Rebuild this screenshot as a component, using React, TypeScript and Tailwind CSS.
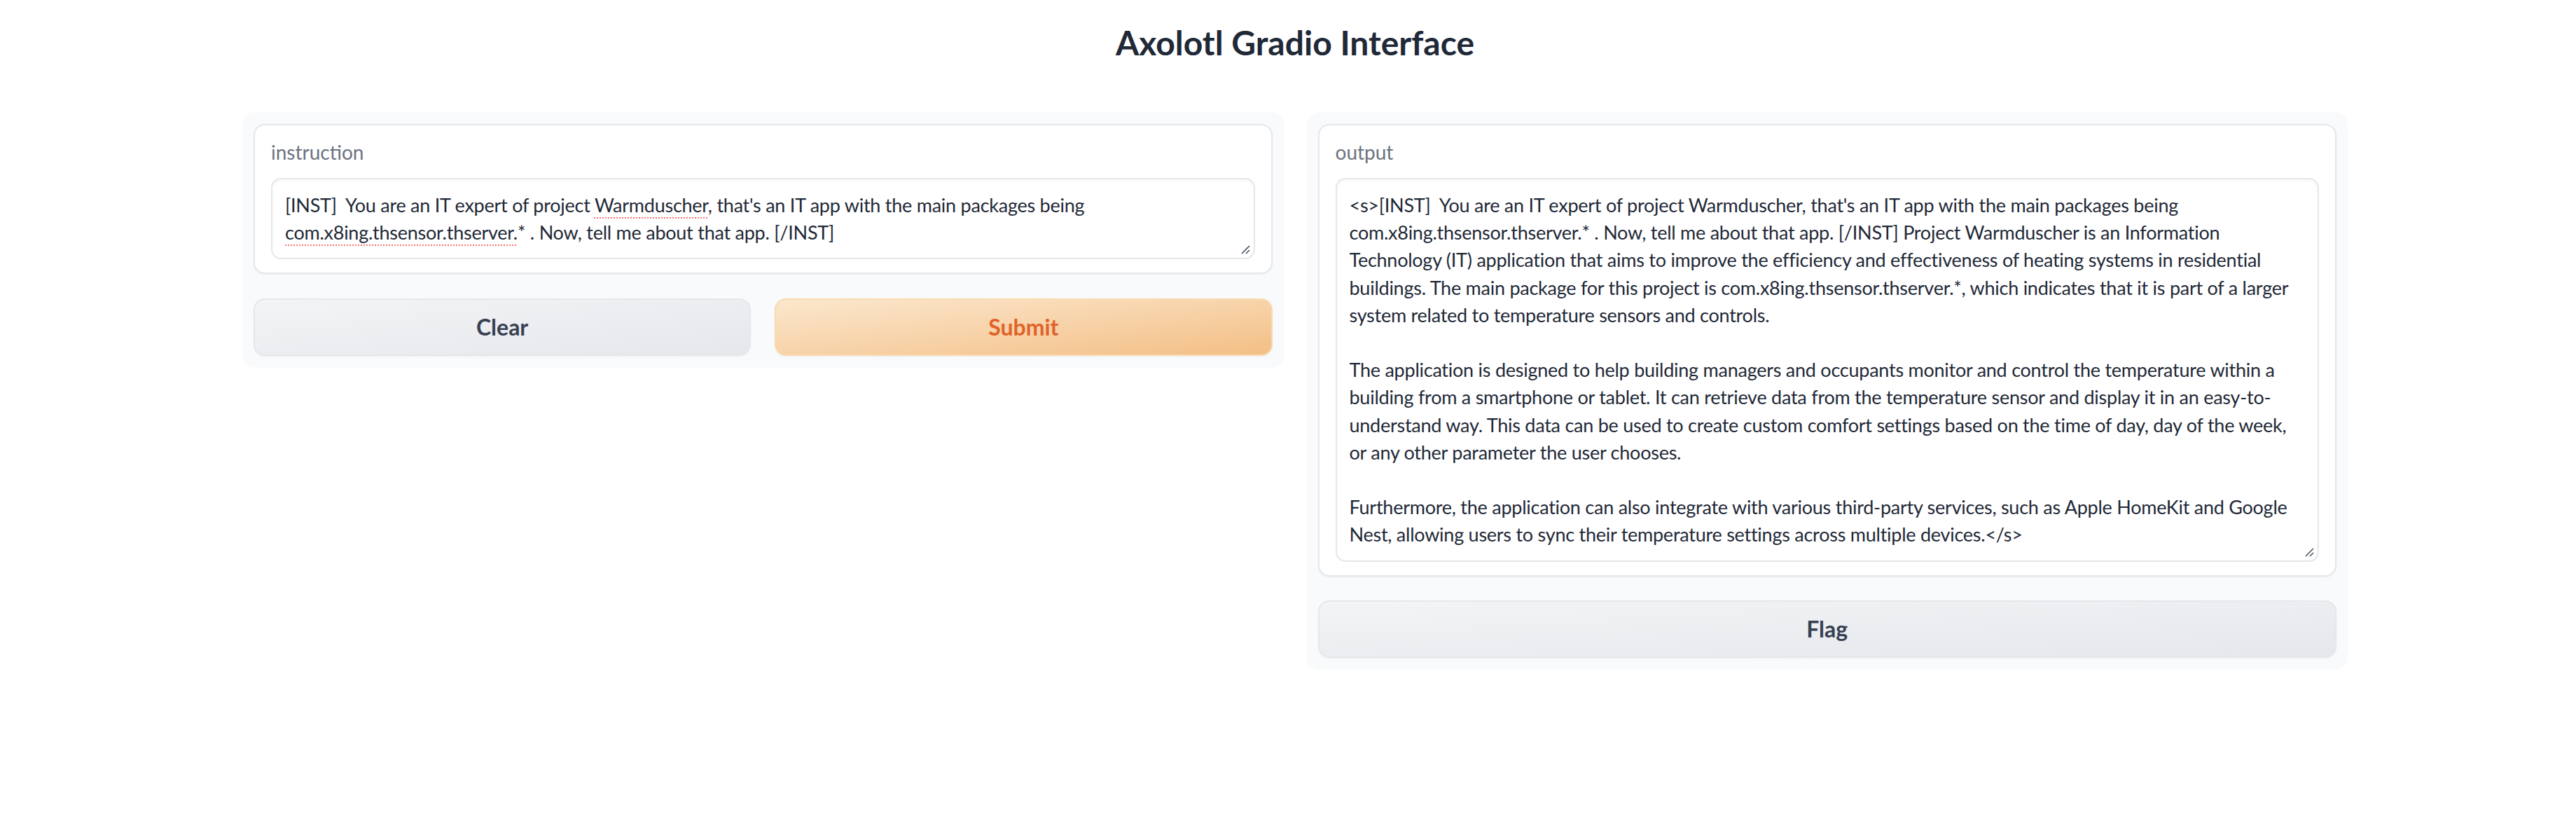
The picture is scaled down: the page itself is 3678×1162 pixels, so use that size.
import React from 'react';

const FONT = 'font-["Lato","Open_Sans",sans-serif]';

const instructionLines: React.ReactNode[] = [
    <>
        {'[INST]  You are an IT expert of project '}
        <span className="underline decoration-dotted decoration-[#f87171] decoration-2 underline-offset-[7px]">Warmduscher</span>
        {", that's an IT app with the main packages being"}
    </>,
    <>
        <span className="underline decoration-dotted decoration-[#f87171] decoration-2 underline-offset-[7px]">com.x8ing.thsensor.thserver.</span>
        {'* . Now, tell me about that app. [/INST]'}
    </>,
];

const outputLines = [
    "<s>[INST]  You are an IT expert of project Warmduscher, that's an IT app with the main packages being",
    'com.x8ing.thsensor.thserver.* . Now, tell me about that app. [/INST] Project Warmduscher is an Information',
    'Technology (IT) application that aims to improve the efficiency and effectiveness of heating systems in residential',
    'buildings. The main package for this project is com.x8ing.thsensor.thserver.*, which indicates that it is part of a larger',
    'system related to temperature sensors and controls.',
    '',
    'The application is designed to help building managers and occupants monitor and control the temperature within a',
    'building from a smartphone or tablet. It can retrieve data from the temperature sensor and display it in an easy-to-',
    'understand way. This data can be used to create custom comfort settings based on the time of day, day of the week,',
    'or any other parameter the user chooses.',
    '',
    'Furthermore, the application can also integrate with various third-party services, such as Apple HomeKit and Google',
    'Nest, allowing users to sync their temperature settings across multiple devices.</s>',
];

// little diagonal grip drawn in the textarea corner
const ResizeGrip = () => (
    <svg className="absolute right-[4px] bottom-[4px]" width="16" height="16" viewBox="0 0 16 16">
        <line x1="14" y1="3" x2="3" y2="14" stroke="#4b5563" strokeWidth="1.6" />
        <line x1="14" y1="9" x2="9" y2="14" stroke="#4b5563" strokeWidth="1.6" />
    </svg>
);

const TextBox = ({ children }: { children: React.ReactNode }) => (
    <div className="relative rounded-[14px] border-2 border-[#e5e7eb] bg-white px-[18px] py-[17px] shadow-[inset_0_2px_4px_rgba(0,0,0,0.04)]">
        <div className="whitespace-pre text-[27px] tracking-[-0.25px] leading-[39.2px] text-[#1f2937] overflow-hidden">
            {children}
        </div>
        <ResizeGrip />
    </div>
);

const Card = ({ label, children }: { label: string; children: React.ReactNode }) => (
    <div className="rounded-[16px] border-2 border-[#e5e7eb] bg-white px-[23px] pt-[19px] pb-[19px] shadow-[0_1px_3px_rgba(0,0,0,0.05)]">
        <div className="text-[28px] leading-[39px] text-[#6b7280] mb-[17px]">{label}</div>
        {children}
    </div>
);

const Button = ({ label, primary }: { label: string; primary?: boolean }) => (
    <button
        className={
            primary
                ? 'flex-1 min-w-0 h-[82px] rounded-[16px] border-2 border-[#fbd9b0] bg-gradient-to-br from-[#fbe7cd] to-[#f3bf85] text-[32px] font-bold text-[#e0632a] shadow-[0_1px_2px_rgba(0,0,0,0.05)]'
                : 'flex-1 min-w-0 h-[82px] rounded-[16px] border-2 border-[#e5e7eb] bg-gradient-to-br from-[#f3f4f6] to-[#e5e7eb] text-[32px] font-bold text-[#374151] shadow-[0_1px_2px_rgba(0,0,0,0.05)]'
        }
    >
        {label}
    </button>
);

export default function App() {
    return (
        <div className={`min-h-[1162px] bg-white ${FONT} pl-[20px]`}>
            <div className="pt-[32px]">
                <h1 className="text-center text-[48px] leading-[58px] font-bold text-[#1f2937]">
                    Axolotl Gradio Interface
                </h1>
            </div>

            <div className="mx-auto w-[3006px] mt-[70px] grid grid-cols-2 items-start gap-[33px]">
                {/* Input column */}
                <div className="min-w-0 rounded-[18px] bg-[#f9fafb] px-4 py-[17px] flex flex-col gap-[35px]">
                    <Card label="instruction">
                        <TextBox>
                            {instructionLines.map((l, i) => (
                                <div key={i}>{l}</div>
                            ))}
                        </TextBox>
                    </Card>
                    <div className="flex gap-[34px]">
                        <Button label="Clear" />
                        <Button label="Submit" primary />
                    </div>
                </div>

                {/* Output column */}
                <div className="min-w-0 rounded-[18px] bg-[#f9fafb] px-4 py-[17px] flex flex-col gap-[34px]">
                    <Card label="output">
                        <TextBox>
                            {outputLines.map((l, i) => (
                                <div key={i}>{l === '' ? '\u00a0' : l}</div>
                            ))}
                        </TextBox>
                    </Card>
                    <div className="flex">
                        <Button label="Flag" />
                    </div>
                </div>
            </div>
        </div>
    );
}
